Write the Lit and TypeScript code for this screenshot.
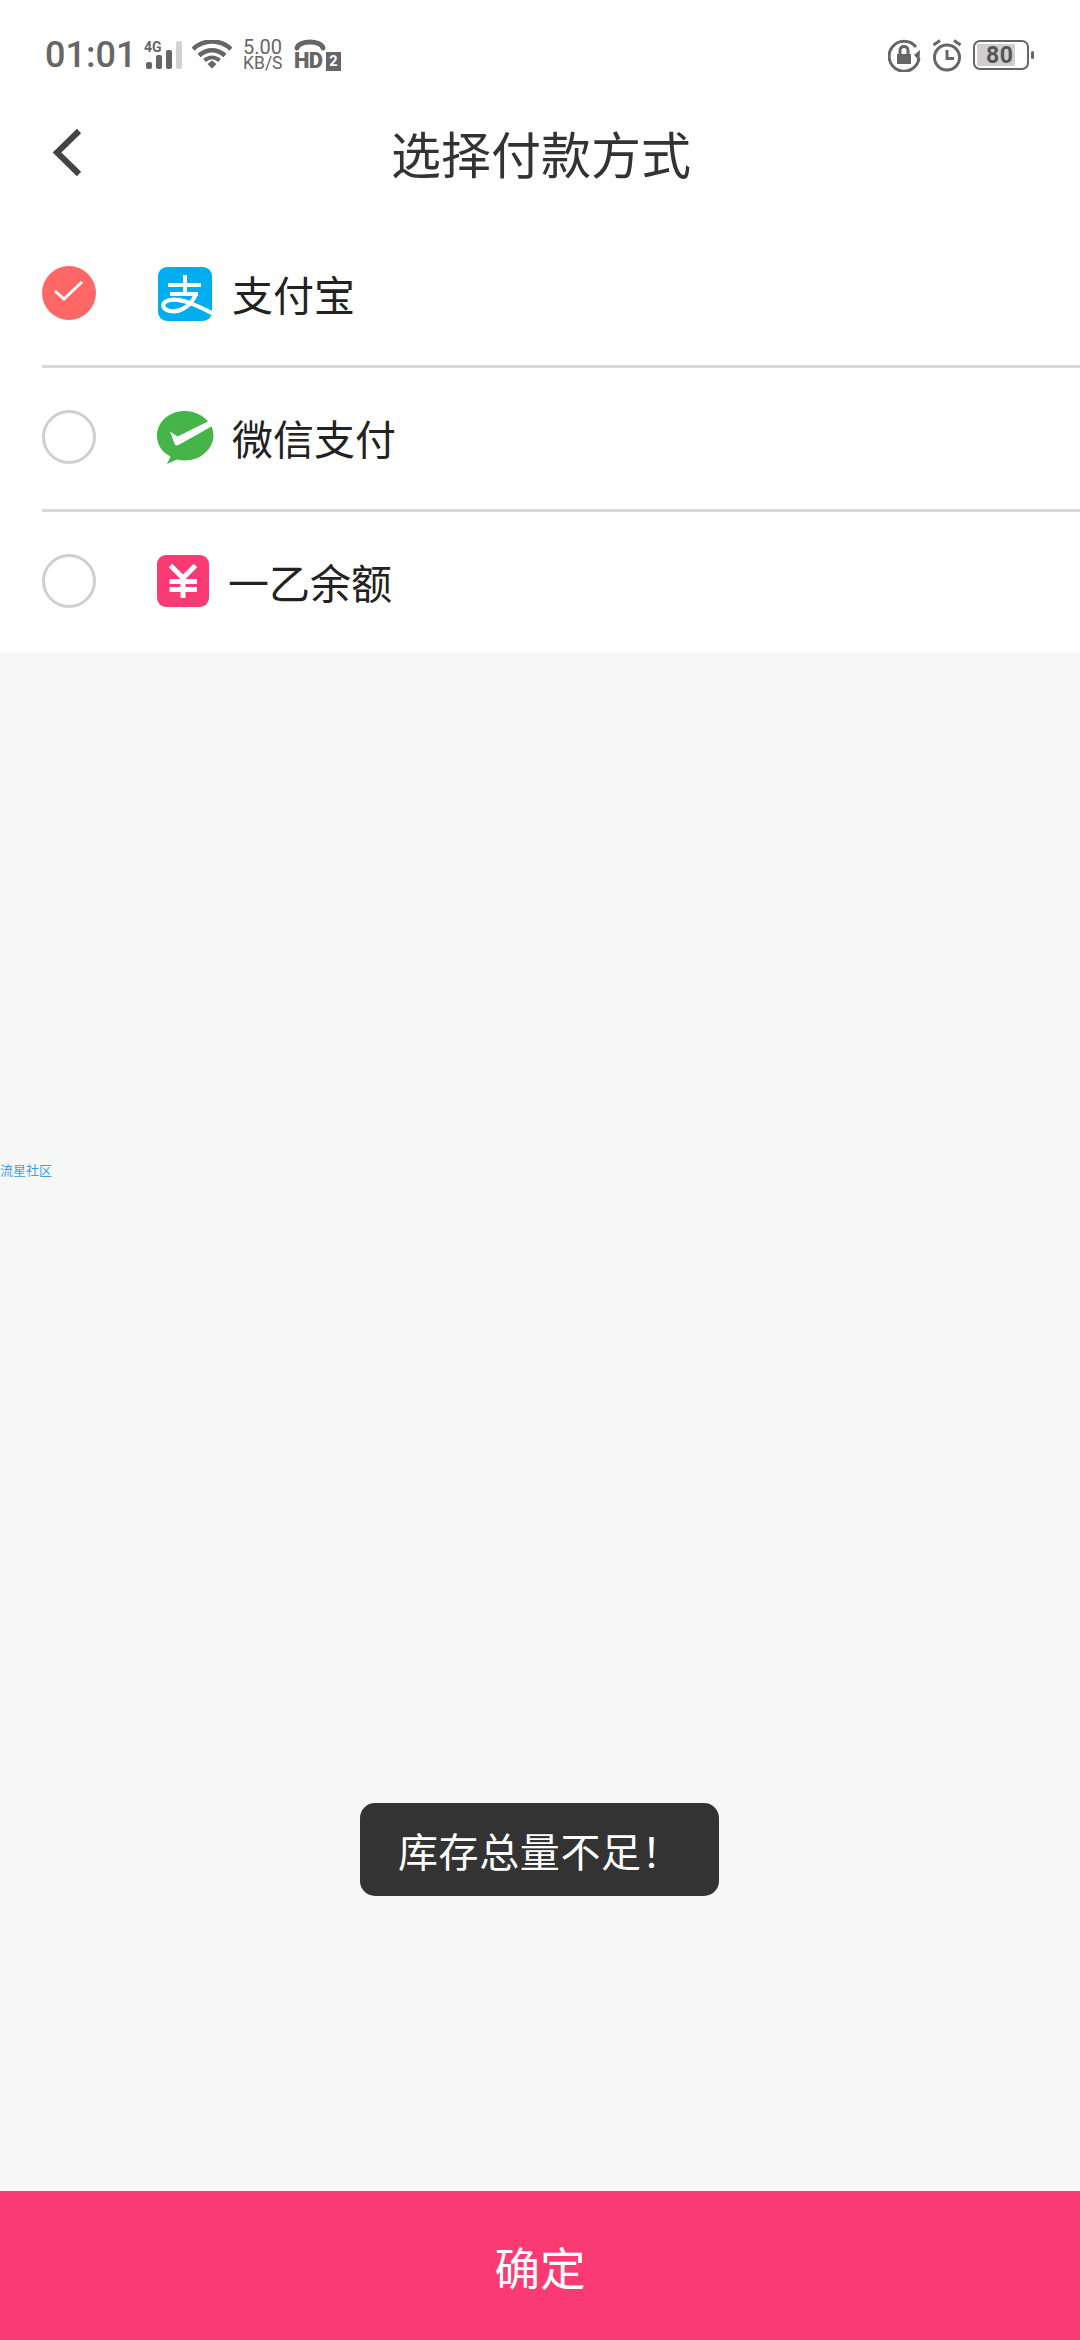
import { LitElement, html, css, svg } from "lit";
import { customElement, state } from "lit/decorators.js";

const alipay = html`<svg class="icon ali" viewBox="0 0 54 54">
  <rect width="54" height="54" rx="9" fill="#00aef0"/>
  <path d="M10 18H43M27 8V26.500M12 27H40" fill="none" stroke="#fff" stroke-width="4"/>
  <path d="M38 27C33 39 22 46 12 44C3 42 3 35 12 33C22 31 36 37 54 46" fill="none" stroke="#fff" stroke-width="4.200"/>
</svg>`;

const wechat = html`<svg class="icon we" viewBox="0 0 58 54">
  <path d="M29 0C13.500 0 1 10.500 1 25C1 34 6.500 41.500 14.500 45.500L11 53L21 48.500C23.500 49 26.200 49.500 29 49.500C44.500 49.500 57.500 38 57.500 24.500C57.500 21.500 56.800 18.500 55.500 15.500L22.500 34C20.500 35 19 34.500 18.500 32.500L14 20.500L21.500 25.500L52 10.500C47 4.500 38.500 0 29 0Z" fill="#45b549"/>
</svg>`;

const balance = html`<svg class="icon bal" viewBox="0 0 52 52">
  <rect width="52" height="52" rx="9" fill="#fa3b73"/>
  <path d="M13.500 10.500L26 23L38.500 10.500M12.500 26.500H40M12.500 34.500H40M26 23V43" fill="none" stroke="#fff" stroke-width="5"/>
</svg>`;

const signal = svg`<svg class="s" width="38" height="30" viewBox="0 0 38 30">
  <rect x="2" y="22" width="6" height="7" rx="2" fill="#666"/>
  <rect x="12" y="15" width="6" height="14" rx="2" fill="#666"/>
  <rect x="22" y="10" width="6" height="19" rx="2" fill="#666"/>
  <rect x="32" y="1" width="6" height="28" rx="2" fill="#d2d2d2"/>
</svg>`;

const wifi = svg`<svg class="s" width="40" height="30" viewBox="0 0 40 30">
  <path d="M1 9C12 -1 28 -1 39 9M7 15.500C15 8.500 25 8.500 33 15.500" fill="none" stroke="#666" stroke-width="4.500"/>
  <path d="M12.500 20.500C17 16.500 23 16.500 27.500 20.500" fill="none" stroke="#666" stroke-width="4"/>
  <path d="M15.500 24L20 20.500L24.500 24L20 28.500Z" fill="#666"/>
</svg>`;

const hd = svg`<svg class="s" width="47" height="33" viewBox="0 0 47 33">
  <path d="M3 9C5 1 27 1 29 9" fill="none" stroke="#666" stroke-width="5" stroke-linecap="round"/>
  <rect x="32" y="13" width="15" height="19" fill="#666"/>
</svg>`;

const lock = svg`<svg class="s" width="33" height="33" viewBox="0 0 33 33">
  <path d="M28 8A15 15 0 1 0 31 19" fill="none" stroke="#666" stroke-width="3"/>
  <path d="M26 16L32 11L31.500 22Z" fill="#666"/>
  <rect x="9" y="15" width="14" height="10" fill="#666"/>
  <path d="M12 15V11.500C12 6 20 6 20 11.500V15" fill="none" stroke="#666" stroke-width="3"/>
</svg>`;

const alarm = svg`<svg class="s" width="30" height="33" viewBox="0 0 30 33">
  <circle cx="15" cy="18.500" r="12.500" fill="none" stroke="#666" stroke-width="3"/>
  <path d="M15 11V19.500H22" fill="none" stroke="#666" stroke-width="3"/>
  <path d="M1.500 6L8 1.500M22 1.500L28.500 6" fill="none" stroke="#666" stroke-width="3"/>
</svg>`;

@customElement("app-root")
export class AppRoot extends LitElement {
  @state() selected = 0;

  static styles = css`
    :host { display: block; width: 1080px; height: 2340px; font-family: "Noto Sans CJK SC", "Noto Sans", sans-serif; }
    .page { position: relative; display: flex; flex-direction: column; height: 2340px; background: #f7f7f7; overflow: hidden; }
    .top { background: #fff; }
    .status { display: flex; align-items: center; justify-content: space-between; height: 110px; padding: 0 51px 0 45px; box-sizing: border-box; }
    .left, .right { display: flex; align-items: center; }
    .left { gap: 10px; }
    .right { gap: 11px; }
    .time { width: 89px; font: 500 36px/1 Roboto, sans-serif; color: #666; white-space: nowrap; }
    .s { display: block; flex: none; }
    .sig { position: relative; flex: none; width: 38px; height: 30px; }
    .sig .g { position: absolute; left: 0; top: 0; font: 700 14px/14px Roboto, sans-serif; color: #666; }
    .hd { position: relative; flex: none; width: 47px; height: 33px; }
    .hd .t { position: absolute; left: 0; top: 11px; font: 900 22px/22px Roboto, sans-serif; letter-spacing: -.8px; color: #666; }
    .hd .n { position: absolute; left: 32px; top: 13px; width: 15px; text-align: center; font: 700 14.500px/19px Roboto, sans-serif; color: #fff; }
    .speed { display: flex; flex-direction: column; align-items: flex-start; color: #666; font-family: Roboto, sans-serif; width: 41px; margin-left: 1px; white-space: nowrap; }
    .speed .a { font-size: 20px; line-height: 16px; }
    .speed .b { font-size: 17.500px; line-height: 16px; }
    .battery { position: relative; display: flex; align-items: center; width: 56px; height: 30px; box-sizing: border-box; border: 2.500px solid #666; border-radius: 7px; }
    .battery .fill { position: absolute; left: 2px; top: 2px; bottom: 2px; width: 38px; background: #cfcfcf; }
    .battery .num { position: relative; padding-left: 11px; font: 700 23px/1 Roboto, sans-serif; color: #555; letter-spacing: .5px; }
    .battery::after { content: ""; position: absolute; right: -7px; top: 9px; width: 3px; height: 8px; border-radius: 2px; background: #666; }
    .header { position: relative; display: flex; align-items: center; justify-content: center; height: 86px; }
    .back { position: absolute; left: 50px; top: 17px; }
    .title { font-size: 50px; line-height: 1; color: #333; transform: translate(1px, -1px); }
    .list { padding-top: 28px; }
    .row { display: flex; align-items: center; height: 141px; margin-left: 42px; border-bottom: 3px solid #d6d6d6; }
    .row:last-child { border-bottom: none; }
    .inner { display: flex; align-items: center; transform: translateY(-2px); }
    .radio { width: 54px; height: 54px; box-sizing: border-box; border: 3.500px solid #cfcfcf; border-radius: 50%; display: flex; align-items: center; justify-content: center; flex: none; }
    .radio.on { background: #ff6767; border: none; }
    .icon { display: block; flex: none; transform: translateY(1px); }
    .ali { width: 54px; height: 54px; margin-left: 62px; }
    .we { width: 58px; height: 54px; margin-left: 60px; }
    .bal { width: 52px; height: 52px; margin-left: 61px; transform: translateY(0); }
    .name { font-size: 41px; line-height: 1; color: #222; transform: translateY(1px); }
    .ali + .name { margin-left: 20px; }
    .we + .name { margin-left: 18px; }
    .bal + .name { margin-left: 19px; }
    .body { flex: 1; }
    .watermark { position: absolute; left: 0; top: 1162px; font-size: 13px; line-height: 16px; color: #3d9fe8; }
    .toast { position: absolute; left: 360px; top: 1803px; width: 359px; height: 93px; box-sizing: border-box; padding-left: 38px; display: flex; align-items: center; background: #333; border-radius: 15px; color: #fff; font-size: 40px; letter-spacing: .6px; }
    .confirm { height: 149px; display: flex; align-items: center; justify-content: center; background: #fa3b73; color: #fff; font-size: 45.500px; }
  `;

  render() {
    const rows = [
      { icon: alipay, name: "支付宝" },
      { icon: wechat, name: "微信支付" },
      { icon: balance, name: "一乙余额" },
    ];
    return html`<div class="page">
      <div class="top">
        <div class="status">
          <div class="left">
            <span class="time">01:01</span>
            <div class="sig">${signal}<span class="g">4G</span></div>
            ${wifi}
            <div class="speed"><span class="a">5.00</span><span class="b">KB/S</span></div>
            <div class="hd">${hd}<span class="t">HD</span><span class="n">2</span></div>
          </div>
          <div class="right">
            ${lock}${alarm}
            <div class="battery"><div class="fill"></div><span class="num">80</span></div>
          </div>
        </div>
        <div class="header">
          <svg class="back" width="36" height="52" viewBox="0 0 36 52"><path d="M29 4L7 25.500L29 47" fill="none" stroke="#444" stroke-width="6"/></svg>
          <span class="title">选择付款方式</span>
        </div>
        <div class="list">
          ${rows.map((r, i) => html`<div class="row" @click=${() => (this.selected = i)}>
            <div class="inner">
              <div class="radio ${this.selected === i ? "on" : ""}">
                ${this.selected === i
                  ? html`<svg width="32" height="24" viewBox="0 0 32 24"><path d="M2 10L11 18L29 1" fill="none" stroke="#fff" stroke-width="3"/></svg>`
                  : ""}
              </div>
              ${r.icon}
              <span class="name">${r.name}</span>
            </div>
          </div>`)}
        </div>
      </div>
      <div class="body"></div>
      <div class="confirm">确定</div>
      <div class="watermark">流星社区</div>
      <div class="toast">库存总量不足！</div>
    </div>`;
  }
}
